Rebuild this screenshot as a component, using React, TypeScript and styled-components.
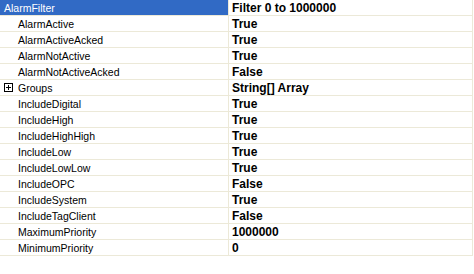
import React from 'react'
import styled, { createGlobalStyle } from 'styled-components'

const Global = createGlobalStyle`
body { margin:0; background:#fff; }
`

const Grid = styled.div`
width:472px;
border-right:1px solid #ECE9D8;
font-family:"Liberation Sans", Arial, sans-serif;
font-size:10.5px;
color:#000;
`

const Row = styled.div`
display:flex;
height:15px;
border-bottom:1px solid #ECE9D8;
`

const Label = styled.div<{ $selected?: boolean; $child?: boolean }>`
width:229px;
border-right:1px solid #ECE9D8;
display:flex;
align-items:center;
padding-left:${p => (p.$child ? '18px' : '4px')};
box-sizing:border-box;
background:${p => (p.$selected ? '#316AC5' : '#fff')};
color:${p => (p.$selected ? '#fff' : '#000')};
white-space:nowrap;
`

const Value = styled.div`
flex:1;
display:flex;
align-items:center;
padding-left:3px;
font-weight:bold;
font-size:12px;
white-space:nowrap;
`

const Expander = styled.span`
width:9px;
height:9px;
margin-left:-14px;
margin-right:5px;
display:inline-flex;
`

const rows: { name: string; value: string; expand?: boolean }[] = [
  { name: 'AlarmActive', value: 'True' },
  { name: 'AlarmActiveAcked', value: 'True' },
  { name: 'AlarmNotActive', value: 'True' },
  { name: 'AlarmNotActiveAcked', value: 'False' },
  { name: 'Groups', value: 'String[] Array', expand: true },
  { name: 'IncludeDigital', value: 'True' },
  { name: 'IncludeHigh', value: 'True' },
  { name: 'IncludeHighHigh', value: 'True' },
  { name: 'IncludeLow', value: 'True' },
  { name: 'IncludeLowLow', value: 'True' },
  { name: 'IncludeOPC', value: 'False' },
  { name: 'IncludeSystem', value: 'True' },
  { name: 'IncludeTagClient', value: 'False' },
  { name: 'MaximumPriority', value: '1000000' },
  { name: 'MinimumPriority', value: '0' },
]

const PlusBox = () => (
  <svg width="9" height="9" viewBox="0 0 9 9">
    <rect x="0.5" y="0.5" width="8" height="8" fill="#fff" stroke="#000" />
    <path d="M2 4.5h5M4.5 2v5" stroke="#000" />
  </svg>
)

const App = () => {
  return (
    <>
      <Global />
      <Grid>
        <Row>
          <Label $selected>AlarmFilter</Label>
          <Value>Filter 0 to 1000000</Value>
        </Row>
        {rows.map(r => (
          <Row key={r.name}>
            <Label $child>
              {r.expand && (
                <Expander>
                  <PlusBox />
                </Expander>
              )}
              {r.name}
            </Label>
            <Value>{r.value}</Value>
          </Row>
        ))}
      </Grid>
    </>
  )
}

export default App
